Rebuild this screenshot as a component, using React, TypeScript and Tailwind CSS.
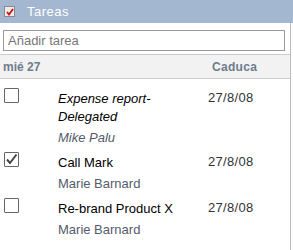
import React from "react";

type Task = {
  title: string;
  who: string;
  due: string;
  done: boolean;
  italic?: boolean;
};

const tasks: Task[] = [
  { title: "Expense report-Delegated", who: "Mike Palu", due: "27/8/08", done: false, italic: true },
  { title: "Call Mark", who: "Marie Barnard", due: "27/8/08", done: true },
  { title: "Re-brand Product X", who: "Marie Barnard", due: "27/8/08", done: false },
];

const Box = ({ checked }: { checked: boolean }) => (
  <div className="w-[15px] h-[15px] border border-[#666] rounded-[1px] bg-white flex items-center justify-center">
    {checked && (
      <svg width="13" height="13" viewBox="0 0 13 13">
        <path d="M2 6.5 L5 10 L11.5 1.5" fill="none" stroke="#444" strokeWidth="2" />
      </svg>
    )}
  </div>
);

const App = () => {
  return (
    <div className="w-[293px] h-[250px] bg-white overflow-hidden font-['Liberation_Sans',Arial,sans-serif]">
      <div className="h-[23px] bg-[#a3b7d0] flex items-center pl-[4px]">
        <div className="w-[11px] h-[11px] border border-[#8a8a8a] bg-[#ececec] flex items-center justify-center">
          <svg width="8" height="8" viewBox="0 0 8 8">
            <path d="M1 4 L3 6.5 L7 1" fill="none" stroke="#d01010" strokeWidth="1.8" />
          </svg>
        </div>
        <span className="ml-[12px] text-[13px] tracking-[0.5px] text-white">Tareas</span>
      </div>

      <div className="w-[291px] h-[227px] border-r border-[#bbb]">
        <div className="pt-[5px] pl-[3px] pr-[5px]">
          <input
            className="w-full h-[21px] border border-[#999] px-[4px] text-[13px] text-[#333] placeholder:text-[#777] outline-none"
            placeholder="Añadir tarea"
          />
        </div>

        <div className="mt-[2px] h-[25px] border-y border-[#ccc] bg-[#f2f2f2] flex items-center text-[12px] font-bold text-[#6e7c8d]">
          <span className="pl-[3px] w-[212px]">mié 27</span>
          <span className="tracking-[0.3px]">Caduca</span>
        </div>

        <div className="pt-[11px]">
          {tasks.map((t) => (
            <div key={t.title} className="flex pb-[7px]">
              <div className="w-[58px] pl-[4px] -mt-[2px]">
                <Box checked={t.done} />
              </div>
              <div className="w-[150px] pr-[6px]">
                <div className={`text-[13px] leading-[18px] text-black ${t.italic ? "italic" : ""}`}>
                  {t.title}
                </div>
                <div className={`mt-[3px] text-[13px] leading-[18px] text-[#555b6b] ${t.italic ? "italic" : ""}`}>
                  {t.who}
                </div>
              </div>
              <div className="text-[13px] leading-[18px] text-[#333] -mt-[1px] tracking-[0.3px]">{t.due}</div>
            </div>
          ))}
        </div>
      </div>
    </div>
  );
};

export default App;
